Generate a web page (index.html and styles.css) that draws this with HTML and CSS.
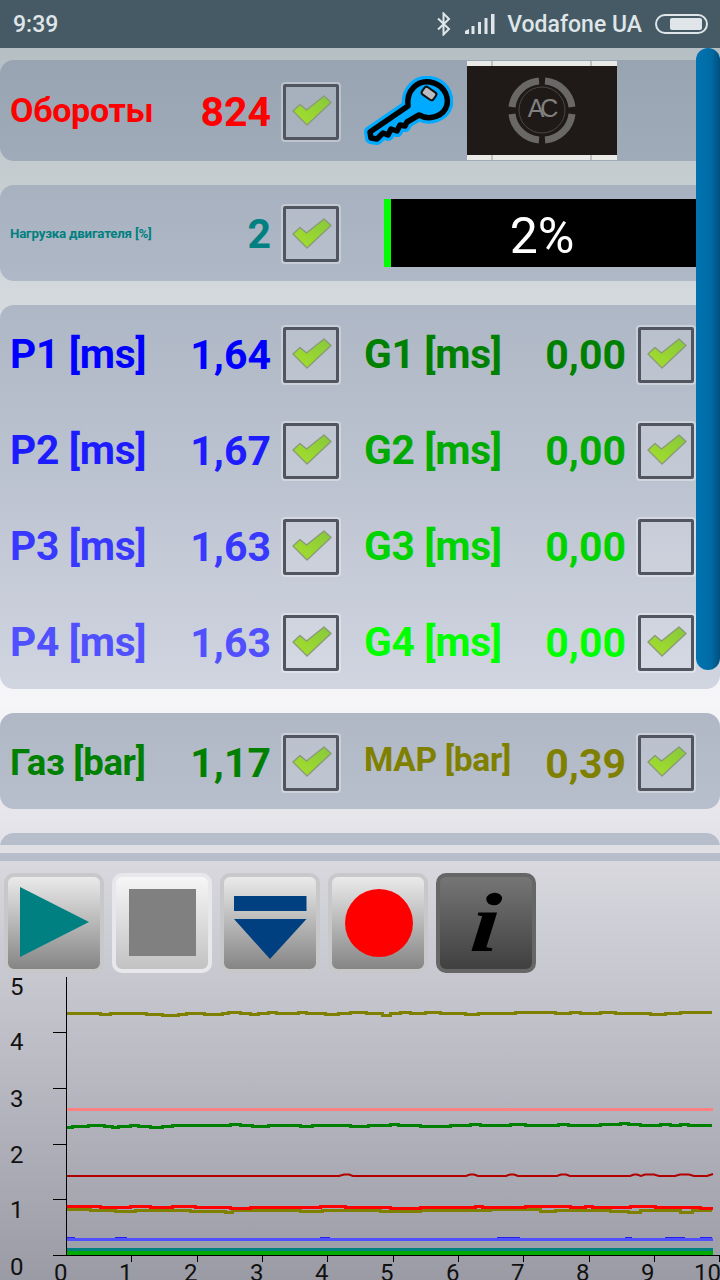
FILE: index.html
```html
<!DOCTYPE html>
<html lang="ru">
<head>
<meta charset="utf-8">
<title>Gauges</title>
<link rel="stylesheet" href="styles.css">
</head>
<body>
<svg class="defs" width="0" height="0" aria-hidden="true">
  <defs>
    <linearGradient id="checkfill" x1="1" y1="0" x2="0" y2="1">
      <stop offset="0" stop-color="#86c83c"/>
      <stop offset="1" stop-color="#a6e02a"/>
    </linearGradient>
    <symbol id="check" viewBox="0 0 40 32">
      <path d="M1 16 L8 9.500 L14.500 15 L32 1 L39 7.500 L15 30 Z" fill="url(#checkfill)" stroke="#8b9a78" stroke-width="1.400" stroke-linejoin="round"/>
    </symbol>
  </defs>
</svg>
<div class="phone">
  <header class="status">
    <span class="time">9:39</span>
    <span class="status-right">
      <svg class="bt" width="16" height="24" viewBox="0 0 16 24"><path d="M2 6.500 L13 17 L7.500 22.500 L7.500 1.500 L13 7 L2 17.500" fill="none" stroke="#dfe5e8" stroke-width="2"/></svg>
      <svg class="signal" width="30" height="20" viewBox="0 0 30 20">
        <path d="M0 20 L0 17 L4 15 L4 20 Z M6.500 20 V12 H9.500 V20 Z M13 20 V8 H16 V20 Z M19.500 20 V4 H22.500 V20 Z M26 20 V0 H29.500 V20 Z" fill="#dfe5e8"/>
      </svg>
      <span class="carrier">Vodafone UA</span>
      <span class="battery"><span class="battery-level"></span></span>
    </span>
  </header>

  <main class="scroller">
    <section class="card card-1">
      <div class="row row-top">
        <div class="cell cell-nudge">
          <span class="label label-rpm">Обороты</span>
          <span class="value c-red">824</span>
          <span class="checkbox"><svg class="tick"><use href="#check"/></svg></span>
        </div>
        <svg class="key" width="89" height="70" viewBox="0 0 89 70">
          <g stroke-linejoin="round" stroke-linecap="round">
            <path d="M44 30 C42 14 54 4 66 6 C78 8 85 18 83 29 C80 40 66 45 55 39 L43 46 L41 50 L36 49 L33 55 L27 53 L24 59 L19 57 L13 63 L7 62 L6 56 Z" fill="#00aaff" stroke="#00aaff" stroke-width="12"/>
            <path d="M44 30 C42 14 54 4 66 6 C78 8 85 18 83 29 C80 40 66 45 55 39 L43 46 L41 50 L36 49 L33 55 L27 53 L24 59 L19 57 L13 63 L7 62 L6 56 Z" fill="#00aaff" stroke="#000" stroke-width="5.500"/>
          </g>
          <rect x="58" y="13" width="14" height="9" rx="2.500" transform="rotate(35 65 17.500)" fill="#b9bcc0" stroke="#111" stroke-width="2"/>
        </svg>
        <svg class="logo" width="150" height="99" viewBox="0 0 150 99">
          <rect width="150" height="99" fill="#e9e9e8"/>
          <rect y="5" width="150" height="89" fill="#1f1a18"/>
          <path d="M25 0 V5 M124 0 V5 M25 94 V99 M124 94 V99" stroke="#999"/>
          <g fill="none" stroke="#6a6867" stroke-width="7">
            <path d="M72 20 A29.500 29.500 0 0 0 45 46"/>
            <path d="M78 20 A29.500 29.500 0 0 1 105 46"/>
            <path d="M45 53 A29.500 29.500 0 0 0 72 79"/>
            <path d="M105 53 A29.500 29.500 0 0 1 78 79"/>
          </g>
          <circle cx="75" cy="49" r="23" fill="none" stroke="#4a4745" stroke-width="1"/>
          <text class="logo-text" x="74" y="56">AC</text>
        </svg>
      </div>
    </section>

    <section class="card card-2">
      <div class="row row-small">
        <div class="cell">
          <span class="label label-small">Нагрузка двигателя [%]</span>
          <span class="value c-teal">2</span>
          <span class="checkbox"><svg class="tick"><use href="#check"/></svg></span>
        </div>
        <div class="progress">
          <span class="progress-fill"></span>
          <span class="progress-text">2%</span>
        </div>
      </div>
    </section>

    <section class="card card-3">
      <div class="row">
        <div class="cell"><span class="label c-p1">P1 [ms]</span><span class="value c-p1">1,64</span><span class="checkbox"><svg class="tick"><use href="#check"/></svg></span></div>
        <div class="cell"><span class="label c-g1">G1 [ms]</span><span class="value c-g1">0,00</span><span class="checkbox"><svg class="tick"><use href="#check"/></svg></span></div>
      </div>
      <div class="row">
        <div class="cell"><span class="label c-p2">P2 [ms]</span><span class="value c-p2">1,67</span><span class="checkbox"><svg class="tick"><use href="#check"/></svg></span></div>
        <div class="cell"><span class="label c-g2">G2 [ms]</span><span class="value c-g2">0,00</span><span class="checkbox"><svg class="tick"><use href="#check"/></svg></span></div>
      </div>
      <div class="row">
        <div class="cell"><span class="label c-p3">P3 [ms]</span><span class="value c-p3">1,63</span><span class="checkbox"><svg class="tick"><use href="#check"/></svg></span></div>
        <div class="cell"><span class="label c-g3">G3 [ms]</span><span class="value c-g3">0,00</span><span class="checkbox"></span></div>
      </div>
      <div class="row">
        <div class="cell"><span class="label c-p4">P4 [ms]</span><span class="value c-p4">1,63</span><span class="checkbox"><svg class="tick"><use href="#check"/></svg></span></div>
        <div class="cell"><span class="label c-g4">G4 [ms]</span><span class="value c-g4">0,00</span><span class="checkbox"><svg class="tick"><use href="#check"/></svg></span></div>
      </div>
    </section>

    <section class="card card-4">
      <div class="row">
        <div class="cell"><span class="label label-gas c-g1">Газ [bar]</span><span class="value c-g1">1,17</span><span class="checkbox"><svg class="tick"><use href="#check"/></svg></span></div>
        <div class="cell"><span class="label label-map c-olive">MAP [bar]</span><span class="value value-map c-olive">0,39</span><span class="checkbox"><svg class="tick"><use href="#check"/></svg></span></div>
      </div>
    </section>

    <section class="card card-5"></section>
    <div class="scrollbar"></div>
  </main>

  <div class="divider"></div>

  <section class="panel">
    <div class="toolbar">
      <button class="btn" type="button">
        <svg width="92" height="92" viewBox="0 0 92 92"><path d="M12 10 L81 45 L12 80 Z" fill="#008080"/></svg>
      </button>
      <button class="btn btn-pressed" type="button">
        <svg width="92" height="92" viewBox="0 0 92 92"><rect x="13" y="12" width="67" height="67" fill="#808080"/></svg>
      </button>
      <button class="btn" type="button">
        <svg width="92" height="92" viewBox="0 0 92 92"><path d="M10 19 H82.500 V34 H10 Z M10 42 H82.500 L46 82 Z" fill="#004080"/></svg>
      </button>
      <button class="btn" type="button">
        <svg width="92" height="92" viewBox="0 0 92 92"><ellipse cx="47" cy="46" rx="34" ry="34" fill="#f00"/></svg>
      </button>
      <button class="btn btn-info" type="button"><span class="info-i">i</span></button>
    </div>

    <svg class="chart" width="720" height="303" viewBox="0 977 720 303">
      <path fill="none" stroke="#b00000" stroke-width="2" d="M67 1176 H339 L344 1174.500 H349 L353 1176 H466 L470 1174.500 H474 L478 1176 H506 L510 1174.500 H514 L518 1176 H557 L561 1174.500 H566 L570 1176 H630 L634 1174.500 H637 L641 1176 L645 1174.500 H654 L659 1176 H675 L680 1174.500 H689 L694 1176 H707 L713 1174"/>
      <g class="traces" fill="none">
        <path stroke="#808000" stroke-width="3" d="M67 1013 H100 V1014 H110 V1013 H146 V1014 H162 V1015 H178 V1014 H186 V1013 H204 V1014 H222 V1013 H228 V1012 H240 V1013 H250 V1014 H258 V1013 H268 V1012 H276 V1013 H298 V1012 H306 V1013 H325 V1014 H338 V1013 H350 V1012 H366 V1013 H382 V1015 H390 V1013 H400 V1012 H410 V1013 H425 V1012 H440 V1013 H465 V1014 H478 V1013 H515 V1012 H555 V1013 H570 V1012 H580 V1013 H600 V1012 H615 V1013 H650 V1014 H665 V1013 H680 V1012 H712"/>
        <path stroke="#ff8080" stroke-width="3" d="M67 1109.500 H713"/>
        <path stroke="#008000" stroke-width="3" d="M67 1127 H72 V1126 H88 V1125 H104 V1126 H112 V1127 H118 V1126 H130 V1125 H138 V1126 H150 V1127 H162 V1126 H172 V1125 H230 V1124 H240 V1125 H252 V1126 H268 V1125 H300 V1126 H312 V1125 H350 V1126 H368 V1125 H390 V1124 H398 V1125 H420 V1126 H450 V1125 H470 V1124 H480 V1125 H510 V1124 H525 V1125 H558 V1124 H568 V1125 H600 V1124 H620 V1123 H628 V1124 H640 V1125 H660 V1124 H670 V1125 H680 V1124 H688 V1125 H712"/>
        <path stroke="#808000" stroke-width="3" d="M67 1209 H90 V1210 H115 V1211 H135 V1210 H190 V1211 H225 V1212 H232 V1210 H300 V1211 H322 V1210 H380 V1211 H420 V1210 H490 V1209 H540 V1211 H555 V1210 H610 V1211 H628 V1212 H640 V1210 H680 V1212 H692 V1210 H712"/>
        <path stroke="#f00" stroke-width="3" d="M67 1206 H100 V1207 H130 V1206 H150 V1207 H172 V1206 H195 V1207 H230 V1208 H250 V1207 H320 V1206 H345 V1207 H390 V1208 H420 V1207 H475 V1206 H482 V1207 H525 V1206 H570 V1207 H585 V1206 H592 V1207 H630 V1206 H655 V1207 H700 V1208 H713"/>
        <path stroke="#5050ff" stroke-width="3" d="M67 1239.500 H713"/>
        <path stroke="#2020f0" stroke-width="1" d="M67 1237.500 H75 M115 1237.500 H127 M320 1237.500 H330 M497 1237.500 H520 M625 1237.500 H632 M665 1237.500 H685 M700 1237.500 H712"/>
        <path stroke="#008080" stroke-width="4" d="M67 1250 H713"/>
        <path stroke="#00aa00" stroke-width="4" d="M67 1253 H713"/>
      </g>
      <path class="axis" d="M66.500 977 V1255.500 M53 1032.500 H66 M53 1088.500 H66 M53 1144.500 H66 M53 1199.500 H66 M53 1255.500 H719"/>
      <path class="axis" d="M131.500 1255 V1262 M197.500 1255 V1262 M262.500 1255 V1262 M327.500 1255 V1262 M393.500 1255 V1262 M458.500 1255 V1262 M523.500 1255 V1262 M589.500 1255 V1262 M654.500 1255 V1262 M719.500 1255 V1262"/>
      <g class="chart-text">
        <text x="10" y="995">5</text>
        <text x="10" y="1050">4</text>
        <text x="10" y="1107">3</text>
        <text x="10" y="1163">2</text>
        <text x="10" y="1218">1</text>
        <text x="10" y="1275">0</text>
        <text x="54" y="1281">0</text>
        <text x="119" y="1281">1</text>
        <text x="184" y="1281">2</text>
        <text x="250" y="1281">3</text>
        <text x="315" y="1281">4</text>
        <text x="380" y="1281">5</text>
        <text x="446" y="1281">6</text>
        <text x="511" y="1281">7</text>
        <text x="576" y="1281">8</text>
        <text x="641" y="1281">9</text>
        <text x="694" y="1281">10</text>
      </g>
    </svg>
  </section>
</div>
</body>
</html>
```
FILE: styles.css
```css
* { box-sizing: border-box; }
html, body { margin: 0; padding: 0; }
body { font-family: Roboto, "Liberation Sans", sans-serif; background: #fff; }
.defs { position: absolute; }

.phone { width: 720px; height: 1280px; overflow: hidden; display: flex; flex-direction: column; }

.status {
  height: 48px; flex: none; background: #455a64; color: #dfe5e8;
  display: flex; align-items: center; justify-content: space-between;
  padding: 0 12px 0 13px; font-size: 23px; font-weight: 500;
}
.status-right { display: flex; align-items: center; }
.bt { margin-right: 13px; }
.signal { margin-right: 12px; }
.carrier { margin-right: 13px; }
.battery {
  width: 53px; height: 20px; border: 2px solid #dfe5e8; border-radius: 10px;
  display: flex; justify-content: flex-end; align-items: center; padding-right: 4px;
}
.battery-level { width: 32px; height: 12px; background: #dfe5e8; border-radius: 2px; }

.scroller {
  position: relative; height: 797px; flex: none; overflow: hidden;
  padding-top: 12px; display: flex; flex-direction: column; gap: 24px;
  background: linear-gradient(180deg, #b5bfc3 0%, #c3cbcf 14%, #d2d8dc 30%, #e6e8ec 55%, #f6f6f9 82%, #e1e1e7 100%);
}
.card { flex: none; width: 720px; border-radius: 14px; padding: 0 10px; }
.card-1 { height: 101px; background: linear-gradient(180deg, #98a4b2, #a0abb9); }
.card-2 { height: 96px; background: linear-gradient(180deg, #a7b1bf, #afb8c6); padding-right: 0; }
.card-3 { height: 384px; background: linear-gradient(180deg, #aeb7c5, #bcc3d0 45%, #d0d5e0); }
.card-4 { height: 96px; background: linear-gradient(180deg, #b0b7c5, #b8bfcc); }
.card-5 { height: 96px; background: #b6bdcb; }

.row { height: 96px; padding-top: 3px; display: flex; align-items: center; gap: 24px; }
.row-top { height: 101px; padding-top: 0; gap: 0; }
.row-small { padding-top: 2px; gap: 0; }
.cell { width: 331px; flex: none; display: flex; align-items: center; }
.cell + .cell .label { margin-left: -1px; }
.cell-nudge { padding-top: 2px; }

.label { flex: 1; font-weight: 700; font-size: 40.7px; margin-top: -1px; white-space: nowrap; letter-spacing: -0.3px; }
.label-rpm { font-size: 34px; color: #f00; margin-top: -4px; }
.label-small { font-size: 13.3px; color: #008080; margin-top: -2px; letter-spacing: -0.2px; }
.label-gas { font-size: 36.5px; margin-top: 0; }
.label-map { font-size: 33.5px; margin-top: -6px; }
.value { font-weight: 700; font-size: 41px; margin-right: 10px; white-space: nowrap; }
.value-map { margin-top: 2px; }

.checkbox {
  width: 56px; height: 56px; flex: none; margin: 0 2px; display: flex; align-items: center; justify-content: center;
  border: 3px solid #50555f; outline: 2px solid rgba(255, 255, 255, 0.32); outline-offset: 0;
  border-radius: 2px; background: rgba(255, 255, 255, 0.12);
}
.tick { width: 40px; height: 32px; margin: -1px 0 0 2px; }

.key { margin-left: 23px; flex: none; }
.logo { margin-left: 14px; flex: none; }
.logo-text { font-family: "Liberation Sans", sans-serif; font-size: 25px; font-weight: 400; letter-spacing: -4px; fill: #82807f; text-anchor: middle; }

.progress {
  margin-left: 43px; flex: 1; height: 68px; background: #000; color: #fff;
  display: flex; align-items: center; position: relative; margin-top: -2px;
}
.progress-fill { width: 7px; height: 68px; background: #0f0; flex: none; }
.progress-text { flex: 1; text-align: center; font-size: 50px; margin: 5px 27px 0 0; }

.scrollbar {
  position: absolute; right: 0; top: 0; width: 24px; height: 622px; border-radius: 12px;
  background: linear-gradient(90deg, #0073b0 0%, #006ca6 60%, #00507e 100%);
}

.c-red { color: #f00; }
.c-teal { color: #008080; }
.c-p1 { color: #0000ff; }
.c-p2 { color: #1c1cff; }
.c-p3 { color: #3838ff; }
.c-p4 { color: #5050ff; }
.c-g1 { color: #008000; }
.c-g2 { color: #00aa00; }
.c-g3 { color: #00d400; }
.c-g4 { color: #00ff00; }
.c-olive { color: #808000; }

.divider {
  height: 16px; flex: none;
  background: linear-gradient(180deg, #dfdfe4 0, #dfdfe4 8px, #b7bdca 8px, #b7bdca 16px);
}

.panel {
  flex: 1; padding-top: 12px;
  background: linear-gradient(180deg, #d8d8de 0%, #c6c7cf 28%, #9a9ba5 100%);
}
.toolbar { display: flex; gap: 8px; padding-left: 4px; height: 100px; }
.btn {
  width: 100px; height: 100px; padding: 0; border: 4px solid #c8c8cb; border-radius: 10px;
  background: linear-gradient(180deg, #eaeaea 0%, #858585 100%);
  display: flex; align-items: center; justify-content: center;
}
.btn-pressed { border-color: #e8e8ec; background: linear-gradient(180deg, #f6f6f6 0%, #c2c2c2 100%); }
.btn-info { border-color: #666; background: linear-gradient(180deg, #757575 0%, #404040 100%); }
.info-i {
  display: inline-block; font-family: "Liberation Serif", serif; font-style: italic; font-weight: 700;
  font-size: 84px; line-height: 84px; color: #000; transform: scaleX(1.25) skewX(-4deg);
}

.chart { display: block; margin-top: 4px; overflow: visible; }
.traces { shape-rendering: crispEdges; }
.axis { fill: none; stroke: #000; stroke-width: 1; }
.chart-text text { font-size: 24px; fill: #111; }
```
